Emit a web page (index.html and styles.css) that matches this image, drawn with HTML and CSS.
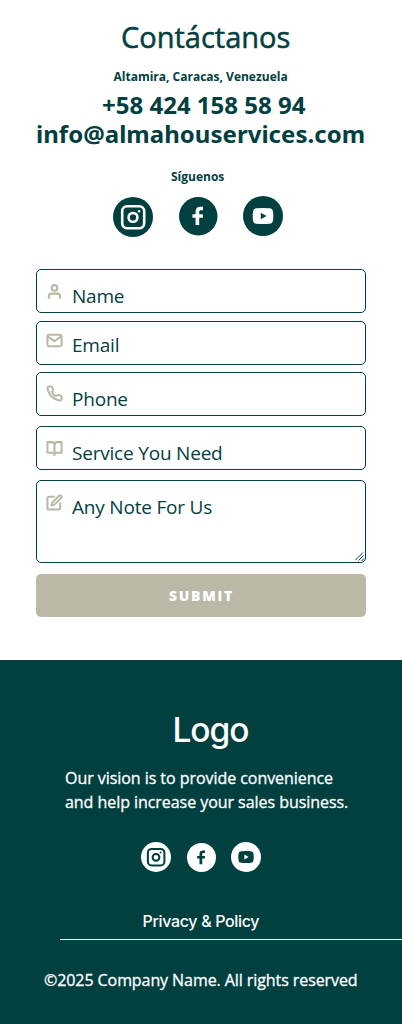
FILE: index.html
```html
<!DOCTYPE html>
<html lang="es">
<head>
<meta charset="utf-8">
<title>Contáctanos</title>
<link rel="stylesheet" href="styles.css">
</head>
<body>
<main class="contact">
  <h1 class="title">Contáctanos</h1>
  <p class="address">Altamira, Caracas, Venezuela</p>
  <p class="phone">+58 424 158 58 94</p>
  <p class="email">info@almahouservices.com</p>
  <p class="follow">Síguenos</p>
  <div class="social">
    <svg class="social-ig" viewBox="0 0 40 40"><circle cx="20" cy="20" r="20" fill="currentColor"/><g fill="none" stroke="#fff" stroke-width="2.600"><rect x="9.200" y="9.200" width="22" height="22" rx="5"/><circle cx="20" cy="20.400" r="4.400"/></g><circle cx="26" cy="14.200" r="1.200" fill="#fff"/></svg>
    <svg class="social-fb" viewBox="0 0 40 40"><circle cx="20" cy="20" r="20" fill="currentColor"/><path fill="#fff" d="M17.200 29.200V21.500H14V17.800h3.200v-2.600c0-3.500 2-5 4.800-5h2.900v3.600h-1.900c-1.500 0-2 .7-2 1.900v2.100h3.800v3.700H21v7.700z"/></svg>
    <svg class="social-yt" viewBox="0 0 40 40"><circle cx="20" cy="20" r="20" fill="currentColor"/><path fill="#fff" d="M13.500 12.300Q20 11.500 26.500 12.300Q29.600 12.600 30 15.500Q30.600 20 30 24.500Q29.600 27.400 26.500 27.700Q20 28.500 13.500 27.700Q10.400 27.400 10 24.500Q9.400 20 10 15.500Q10.400 12.600 13.500 12.300Z"/><path fill="currentColor" d="M17.800 16.800v6.400L23.500 20z"/></svg>
  </div>
  <form class="form">
    <label class="field field-name">
      <svg class="icon" viewBox="0 0 24 24"><path d="M20 21v-2a4 4 0 0 0-4-4H8a4 4 0 0 0-4 4v2"/><circle cx="12" cy="7" r="4"/></svg>
      <span>Name</span>
    </label>
    <label class="field field-email">
      <svg class="icon" viewBox="0 0 24 24"><rect x="2" y="4" width="20" height="16" rx="2"/><path d="m22 6-10 7L2 6"/></svg>
      <span>Email</span>
    </label>
    <label class="field field-phone">
      <svg class="icon" viewBox="0 0 24 24"><path d="M22 16.920v3a2 2 0 0 1-2.180 2 19.790 19.790 0 0 1-8.630-3.070 19.500 19.500 0 0 1-6-6 19.790 19.790 0 0 1-3.070-8.670A2 2 0 0 1 4.110 2h3a2 2 0 0 1 2 1.720 12.840 12.840 0 0 0 .7 2.810 2 2 0 0 1-.45 2.110L8.090 9.910a16 16 0 0 0 6 6l1.270-1.270a2 2 0 0 1 2.110-.45 12.840 12.840 0 0 0 2.810.7A2 2 0 0 1 22 16.920z"/></svg>
      <span>Phone</span>
    </label>
    <label class="field field-service">
      <svg class="icon" viewBox="0 0 24 24"><path d="M2 3h6a4 4 0 0 1 4 4v14a3 3 0 0 0-3-3H2zM22 3h-6a4 4 0 0 0-4 4v14a3 3 0 0 1 3-3h7z"/></svg>
      <span>Service You Need</span>
    </label>
    <label class="field field-note">
      <svg class="icon" viewBox="0 0 24 24"><path d="M11 4H4a2 2 0 0 0-2 2v14a2 2 0 0 0 2 2h14a2 2 0 0 0 2-2v-7"/><path d="M18.500 2.500a2.120 2.120 0 0 1 3 3L12 15l-4 1 1-4z"/></svg>
      <span>Any Note For Us</span>
      <svg class="grip" viewBox="0 0 10 10"><path d="M.5 8 8 .5M3.500 8.500 8.500 3.500M6.500 9 9 6.500"/></svg>
    </label>
    <button class="submit" type="button">SUBMIT</button>
  </form>
</main>
<footer class="footer">
  <div class="logo">Logo</div>
  <p class="vision">Our vision is to provide convenience<br>and help increase your sales business.</p>
  <div class="social-small">
    <svg class="small-ig" viewBox="0 0 40 40"><circle cx="20" cy="20" r="20" fill="#fff"/><g fill="none" stroke="currentColor" stroke-width="2.700"><rect x="9.200" y="9.200" width="22" height="22" rx="5"/><circle cx="20" cy="20.400" r="4.500"/></g><circle cx="26" cy="14" r="1.200" fill="currentColor"/></svg>
    <svg class="small-fb" viewBox="0 0 40 40"><circle cx="20" cy="20" r="20" fill="#fff"/><path fill="currentColor" d="M17.200 29.200V21.500H14V17.800h3.200v-2.600c0-3.500 2-5 4.800-5h2.900v3.600h-1.900c-1.500 0-2 .7-2 1.900v2.100h3.800v3.700H21v7.700z"/></svg>
    <svg class="small-yt" viewBox="0 0 40 40"><circle cx="20" cy="20" r="20" fill="#fff"/><path fill="currentColor" d="M13.500 12.300Q20 11.500 26.500 12.300Q29.600 12.600 30 15.500Q30.600 20 30 24.500Q29.600 27.400 26.500 27.700Q20 28.500 13.500 27.700Q10.400 27.400 10 24.500Q9.400 20 10 15.500Q10.400 12.600 13.500 12.300Z"/><path fill="#fff" d="M17.800 16.800v6.400L23.500 20z"/></svg>
  </div>
  <p class="policy">Privacy &amp; Policy</p>
  <p class="copyright">©2025 Company Name. All rights reserved</p>
</footer>
</body>
</html>
```
FILE: styles.css
```css
* { box-sizing: border-box; }
body { margin: 0; width: 402px; background: #fff; color: #024040; font-family: "Open Sans", sans-serif; }
h1, p { margin: 0; font-weight: inherit; white-space: nowrap; }
svg { display: block; flex: none; overflow: visible; }

.contact { height: 660px; padding-top: 16px; }
.title { height: 40px; padding-left: 121px; font-size: 29px; line-height: 41px; -webkit-text-stroke: .5px currentColor; }
.address { height: 16px; margin-top: 13px; padding-left: 113.500px; font-size: 12px; font-weight: 700; line-height: 16px; }
.phone { height: 29px; margin-top: 5px; padding-left: 102px; font: 700 24px/29px "Noto Sans", sans-serif; }
.email { height: 29px; padding-left: 36px; font: 700 24px/29px "Noto Sans", sans-serif; letter-spacing: .03px; }
.follow { height: 16px; margin-top: 21px; padding-left: 171px; font-size: 12px; font-weight: 700; line-height: 16px; }

.social { display: flex; height: 41px; margin-top: 11px; padding-left: 113px; }
.social-ig { width: 40px; height: 40px; margin-top: 1px; }
.social-fb { width: 38.500px; height: 38.500px; margin-left: 25.700px; margin-top: .6px; }
.social-yt { width: 40px; height: 40px; margin-left: 25.800px; }

.form { width: 330px; margin: 32px 0 0 36px; }
.field { display: flex; position: relative; height: 44px; padding-left: 8.700px; border: 1px solid currentColor; border-radius: 5px; font-size: 19px; font-weight: 400; line-height: 26px; letter-spacing: -.2px; white-space: nowrap; }
.field span { margin-left: 9.300px; padding-top: 13px; }
.icon { width: 17px; height: 17px; margin-top: 13px; fill: none; stroke: #bcb8a8; stroke-width: 2.900; stroke-linecap: round; stroke-linejoin: round; }
.field-email { margin-top: 8px; }
.field-email span { padding-top: 10px; }
.field-email .icon { margin-top: 9.500px; }
.field-phone { margin-top: 7px; }
.field-phone .icon { margin-top: 12px; }
.field-service { margin-top: 10px; }
.field-note { height: 83px; margin-top: 10px; }
.grip { position: absolute; right: 0; bottom: 0; width: 10px; height: 10px; fill: none; stroke: currentColor; stroke-width: 1; }
.submit { display: block; width: 330px; height: 43px; margin-top: 11px; padding: 0; border: 0; border-radius: 5px; background: #bcb8a8; color: #fff; font: 800 14px/43px "Open Sans", sans-serif; letter-spacing: 1.700px; text-indent: 1px; }

.footer { height: 364px; padding-top: 48px; background: #024040; color: #fff; }
.logo { height: 44px; padding-left: 172.500px; font: 500 33.500px/44px "Inter", sans-serif; letter-spacing: -1.100px; }
.vision { height: 48px; margin-top: 14px; padding-left: 65px; font-size: 16px; line-height: 24px; letter-spacing: -.05px; -webkit-text-stroke: .3px currentColor; }
.social-small { display: flex; height: 30px; margin-top: 28px; padding-left: 141px; color: #024040; }
.small-ig { width: 30px; height: 30px; }
.small-fb { width: 29px; height: 29px; margin: .5px 0 0 15.500px; }
.small-yt { width: 30px; height: 30px; margin-left: 15.500px; }
.policy { height: 24px; margin-top: 37px; padding-left: 142.500px; font: 500 16px/24px "Inter", sans-serif; letter-spacing: -.33px; }
.copyright { height: 40px; margin: 6px 0 0 60px; border-top: 1px solid #fff; line-height: 81px; text-indent: -16px; font-size: 16px; letter-spacing: -.08px; -webkit-text-stroke: .3px currentColor; }
```
